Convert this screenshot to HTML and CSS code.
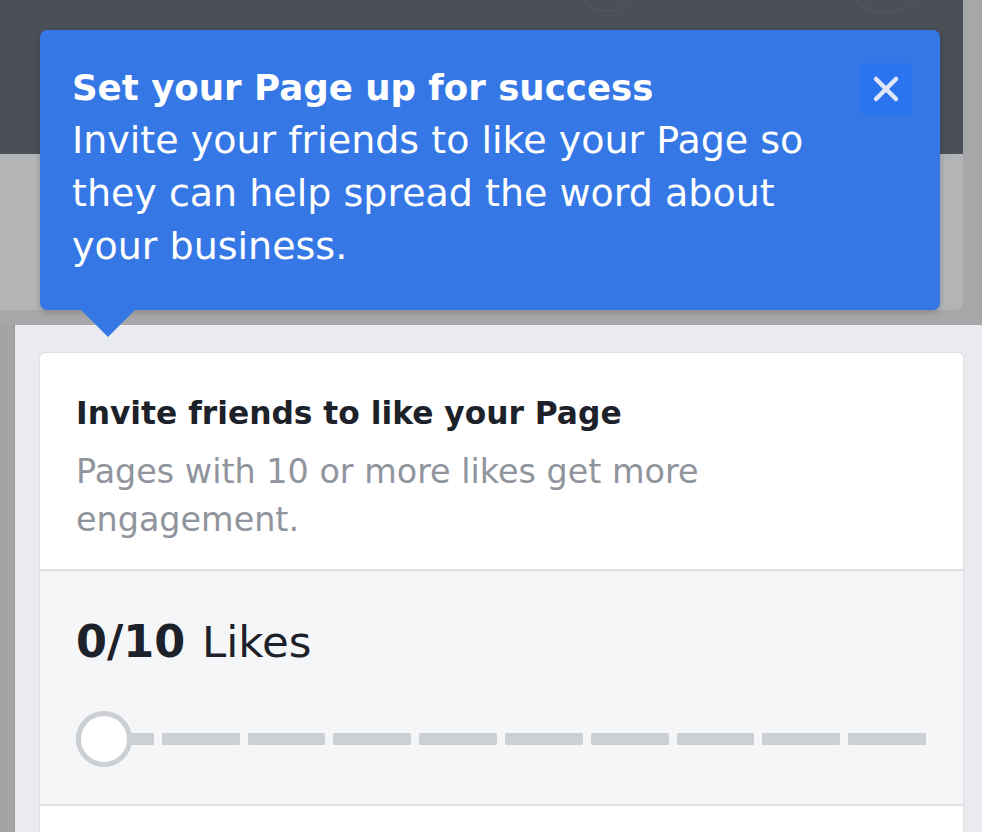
FILE: index.html
```html
<!DOCTYPE html>
<html lang="en">
<head>
<meta charset="utf-8">
<title>Set your Page up for success</title>
<link rel="stylesheet" href="styles.css">
</head>
<body>
<div class="page">
  <div class="dimmed">
    <div class="dimmed-main">
      <div class="topbar">
        <span class="ghost ghost-a"></span>
        <span class="ghost ghost-b"></span>
      </div>
      <div class="dim-card"></div>
    </div>
    <div class="dim-gap"></div>
  </div>
  <div class="spot-row">
    <div class="spot-left"></div>
    <div class="spotlight">
      <section class="card">
        <div class="card-head">
          <h2 class="card-title">Invite friends to like your Page</h2>
          <p class="card-sub">Pages with 10 or more likes get more engagement.</p>
        </div>
        <div class="card-progress">
          <div class="count"><strong>0/10</strong> Likes</div>
          <div class="bar">
            <span class="knob"></span>
            <span class="seg"></span><span class="seg"></span><span class="seg"></span><span class="seg"></span><span class="seg"></span>
            <span class="seg"></span><span class="seg"></span><span class="seg"></span><span class="seg"></span><span class="seg"></span>
          </div>
        </div>
        <div class="card-foot"></div>
      </section>
    </div>
  </div>

  <div class="tooltip" role="dialog">
    <div class="tip-text">
      <div class="tip-title">Set your Page up for success</div>
      <div class="tip-body">Invite your friends to like your Page so they can help spread the word about your business.</div>
    </div>
    <button class="tip-close" aria-label="Close">
      <svg width="30" height="30" viewBox="0 0 30 30"><path d="M5 5 L25 25 M25 5 L5 25" stroke="#dde7f7" stroke-width="4.5" stroke-linecap="round" fill="none"/></svg>
    </button>
    <span class="tip-arrow"></span>
  </div>
</div>
</body>
</html>
```
FILE: styles.css
```css
* { box-sizing: border-box; }
html, body { margin: 0; padding: 0; }
body {
  width: 982px;
  height: 832px;
  overflow: hidden;
  background: #a6a7a9;
  font-family: "DejaVu Sans", Inter, "Liberation Sans", sans-serif;
}
.page {
  position: relative;
  width: 982px;
  height: 832px;
  display: flex;
  flex-direction: column;
}
.dimmed {
  display: flex;
  flex-direction: column;
}
.dimmed-main {
  width: 963px;
  display: flex;
  flex-direction: column;
}
.topbar {
  position: relative;
  height: 154px;
  background: #4b4f58;
  overflow: hidden;
}
.ghost {
  position: absolute;
  border: 2px solid rgba(255,255,255,0.03);
  border-radius: 50%;
}
.ghost-a { left: 575px; top: -52px; width: 64px; height: 64px; }
.ghost-b { left: 845px; top: -66px; width: 80px; height: 80px; }
.dim-card {
  height: 156px;
  background: #b3b4b5;
  border-bottom-right-radius: 7px;
}
.dim-gap { height: 15px; }
.spot-row {
  flex: 1;
  display: flex;
}
.spot-left {
  width: 15px;
  background: #a3a4a6;
  border-right: 1px solid #9a9b9d;
}
.spotlight {
  flex: 1;
  background: #e9ebee;
  padding: 27px 18px 0 24px;
}
.card {
  width: 925px;
  background: #fff;
  border: 1px solid #dddfe2;
  border-bottom: none;
  border-radius: 6px 6px 0 0;
  height: 100%;
  display: flex;
  flex-direction: column;
}
.card-head {
  padding: 36px 36px 25px;
  border-bottom: 2px solid #dddfe2;
}
.card-title {
  margin: 0 0 11px;
  font-size: 31.3px;
  line-height: 48px;
  font-weight: 700;
  color: #1d2129;
}
.card-sub {
  margin: 0;
  width: 680px;
  font-size: 33.4px;
  line-height: 48px;
  color: #90949c;
}
.card-progress {
  background: #f5f6f7;
  padding: 43px 36px 37px;
  border-bottom: 2px solid #dddfe2;
}
.count {
  font-size: 43.5px;
  line-height: 56px;
  color: #1d2129;
  margin-bottom: 41px;
  word-spacing: 3px;
}
.count strong { font-weight: 700; font-size: 44.5px; }
.bar {
  position: relative;
  height: 56px;
  display: flex;
  align-items: center;
  gap: 8px;
  width: 850px;
}
.seg {
  flex: 1;
  height: 12px;
  background: #ccd0d5;
  border-radius: 1px;
}
.knob {
  position: absolute;
  left: 0;
  top: 0;
  width: 56px;
  height: 56px;
  border-radius: 50%;
  background: #fff;
  border: 5px solid #ccd0d5;
}
.card-foot { flex: 1; }

.tooltip {
  position: absolute;
  left: 40px;
  top: 30px;
  width: 900px;
  height: 280px;
  background: #3578e5;
  border-radius: 7px;
  box-shadow: 0 2px 6px rgba(0,0,0,0.2);
  display: flex;
  justify-content: space-between;
  padding: 31px 28px 0 32px;
  color: #fff;
}
.tip-text { width: 770px; }
.tip-title {
  font-size: 35.6px;
  line-height: 53px;
  font-weight: 700;
}
.tip-body {
  font-size: 38px;
  line-height: 53px;
  font-weight: 400;
}
.tip-close {
  width: 52px;
  height: 52px;
  margin-top: 2px;
  border: none;
  border-radius: 5px;
  background: #2a74ef;
  display: flex;
  align-items: center;
  justify-content: center;
  padding: 0;
}
.tip-arrow {
  position: absolute;
  left: 40px;
  bottom: -27px;
  width: 0;
  height: 0;
  border-left: 28px solid transparent;
  border-right: 28px solid transparent;
  border-top: 28px solid #3578e5;
}
```
